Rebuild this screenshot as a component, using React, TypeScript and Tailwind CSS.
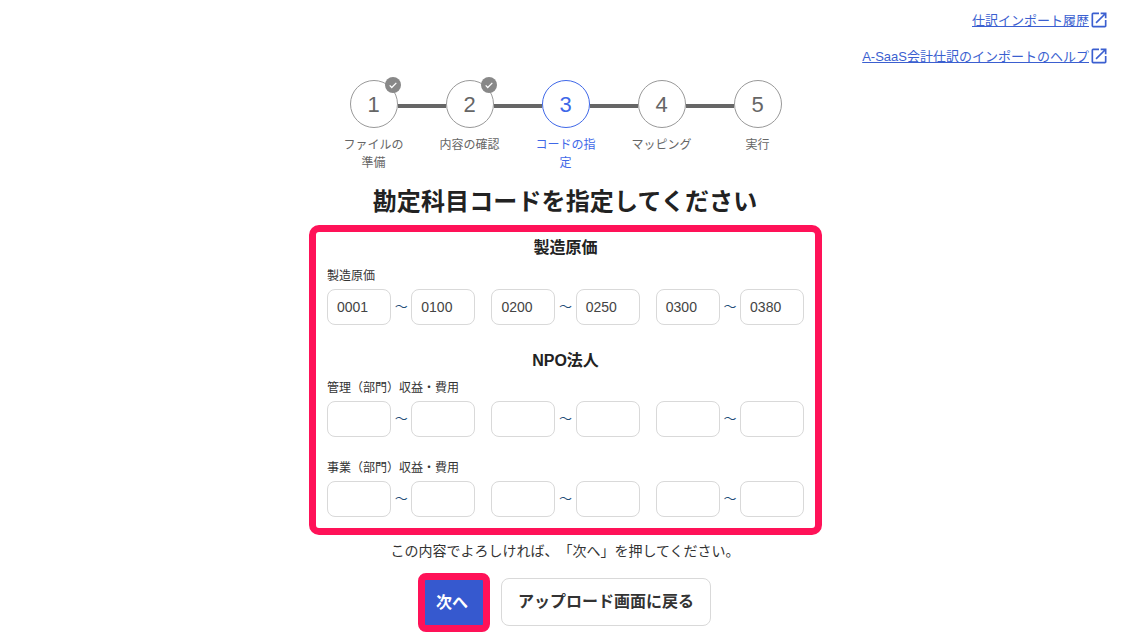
import React from "react";

function Ext() {
  return (
    <svg width="20" height="20" viewBox="0 0 24 24" fill="#3b5fd0" className="shrink-0">
      <path d="M19 19H5V5h7V3H5a2 2 0 0 0-2 2v14a2 2 0 0 0 2 2h14c1.1 0 2-.9 2-2v-7h-2v7zM14 3v2h3.59l-9.83 9.83 1.41 1.41L19 6.41V10h2V3h-7z" />
    </svg>
  );
}

function Step({ n, label, done, active }: { n: number; label: string; done?: boolean; active?: boolean }) {
  return (
    <div className="w-[48px] flex flex-col items-center relative z-10">
      <div
        className={
          "relative w-[48px] h-[48px] pr-[1px] rounded-full border bg-white flex items-center justify-center text-[22px] " +
          (active ? "border-[#3f68e8] text-[#3f68e8]" : "border-[#999999] text-[#666666]")
        }
      >
        {n}
        {done && (
          <div className="absolute top-[-4px] right-[-4px] w-[16px] h-[16px] rounded-full bg-[#888888] flex items-center justify-center">
            <svg width="10" height="10" viewBox="0 0 24 24" fill="none" stroke="#ffffff" strokeWidth="3">
              <path d="M4 13l5 5L20 7" />
            </svg>
          </div>
        )}
      </div>
      <div
        className={
          "w-[64px] mt-[8px] pr-[1px] text-center text-[12px] leading-[18px] " +
          (active ? "text-[#3f68e8]" : "text-[#666666]")
        }
      >
        {label}
      </div>
    </div>
  );
}

function Line() {
  return <div className="w-[48px] h-[4px] mt-[24px] bg-[#666666] shrink-0" />;
}

function Input({ value }: { value?: string }) {
  return (
    <div className="w-[64px] h-[36px] rounded-[8px] border border-[#d9d9d9] bg-white px-[9px] flex items-center text-[14px] text-[#444444]">
      {value}
    </div>
  );
}

function Pair({ a, b }: { a?: string; b?: string }) {
  return (
    <div className="flex items-center">
      <Input value={a} />
      <span className="w-[20.3px] text-center text-[13px] text-[#1f4e79]">～</span>
      <Input value={b} />
    </div>
  );
}

function Row({ label, values, className }: { label: string; values?: string[]; className?: string }) {
  const v = values ?? [];
  return (
    <div className={className}>
      <div className="text-[12px] leading-[18px] text-[#333333]">{label}</div>
      <div className="mt-[4px] flex gap-[16.1px]">
        <Pair a={v[0]} b={v[1]} />
        <Pair a={v[2]} b={v[3]} />
        <Pair a={v[4]} b={v[5]} />
      </div>
    </div>
  );
}

export default function App() {
  return (
    <div
      className="w-[1130px] h-[641px] overflow-hidden bg-white text-[#333333] flex flex-col [text-spacing-trim:space-all]"
      style={{ fontFamily: '"Liberation Sans", "Noto Sans CJK JP", sans-serif' }}
    >
      <div className="pt-[10px] pr-[21px] flex flex-col items-end gap-[16px] text-[13px] leading-[19px] text-[#3b5fd0]">
        <a className="flex items-center underline">仕訳インポート履歴<Ext /></a>
        <a className="flex items-center underline">A-SaaS会計仕訳のインポートのヘルプ<Ext /></a>
      </div>

      <div className="mt-[14px] pl-[2px] flex justify-center">
        <Step n={1} label="ファイルの準備" done />
        <Line />
        <Step n={2} label="内容の確認" done />
        <Line />
        <Step n={3} label="コードの指定" active />
        <Line />
        <Step n={4} label="マッピング" />
        <Line />
        <Step n={5} label="実行" />
      </div>

      <h1 className="mt-[12px] text-center text-[24px] leading-[36px] font-bold tracking-[0.13px] text-[#222222]">
        勘定科目コードを指定してください
      </h1>

      <div className="mt-[5px] mx-auto w-[513px] h-[310px] shrink-0 rounded-[10px] border-[7px] border-[#ff1258] pl-[11.5px] pr-[10.5px] pt-[5px]">
        <div className="text-center text-[16px] leading-[22px] font-bold text-[#222222]">製造原価</div>
        <Row className="mt-[8px]" label="製造原価" values={["0001", "0100", "0200", "0250", "0300", "0380"]} />
        <div className="mt-[25px] text-center text-[16px] leading-[22px] font-bold text-[#222222]">NPO法人</div>
        <Row className="mt-[7px]" label="管理（部門）収益・費用" />
        <Row className="mt-[22px]" label="事業（部門）収益・費用" />
      </div>

      <p className="mt-[6px] text-center text-[14px] leading-[21px] text-[#333333]">
        この内容でよろしければ、「次へ」を押してください。
      </p>

      <div className="mt-[11px] pr-[1px] flex justify-center items-start gap-[11px]">
        <div className="w-[72px] h-[59px] pr-[4px] rounded-[8px] border-[7px] border-[#ff1258] bg-[#3659cf] flex items-center justify-center text-white font-bold text-[16px]">
          次へ
        </div>
        <div className="mt-[5px] w-[210px] h-[48px] rounded-[8px] border border-[#d9d9d9] bg-white flex items-center justify-center font-bold text-[16px] text-[#333333]">
          アップロード画面に戻る
        </div>
      </div>
    </div>
  );
}
